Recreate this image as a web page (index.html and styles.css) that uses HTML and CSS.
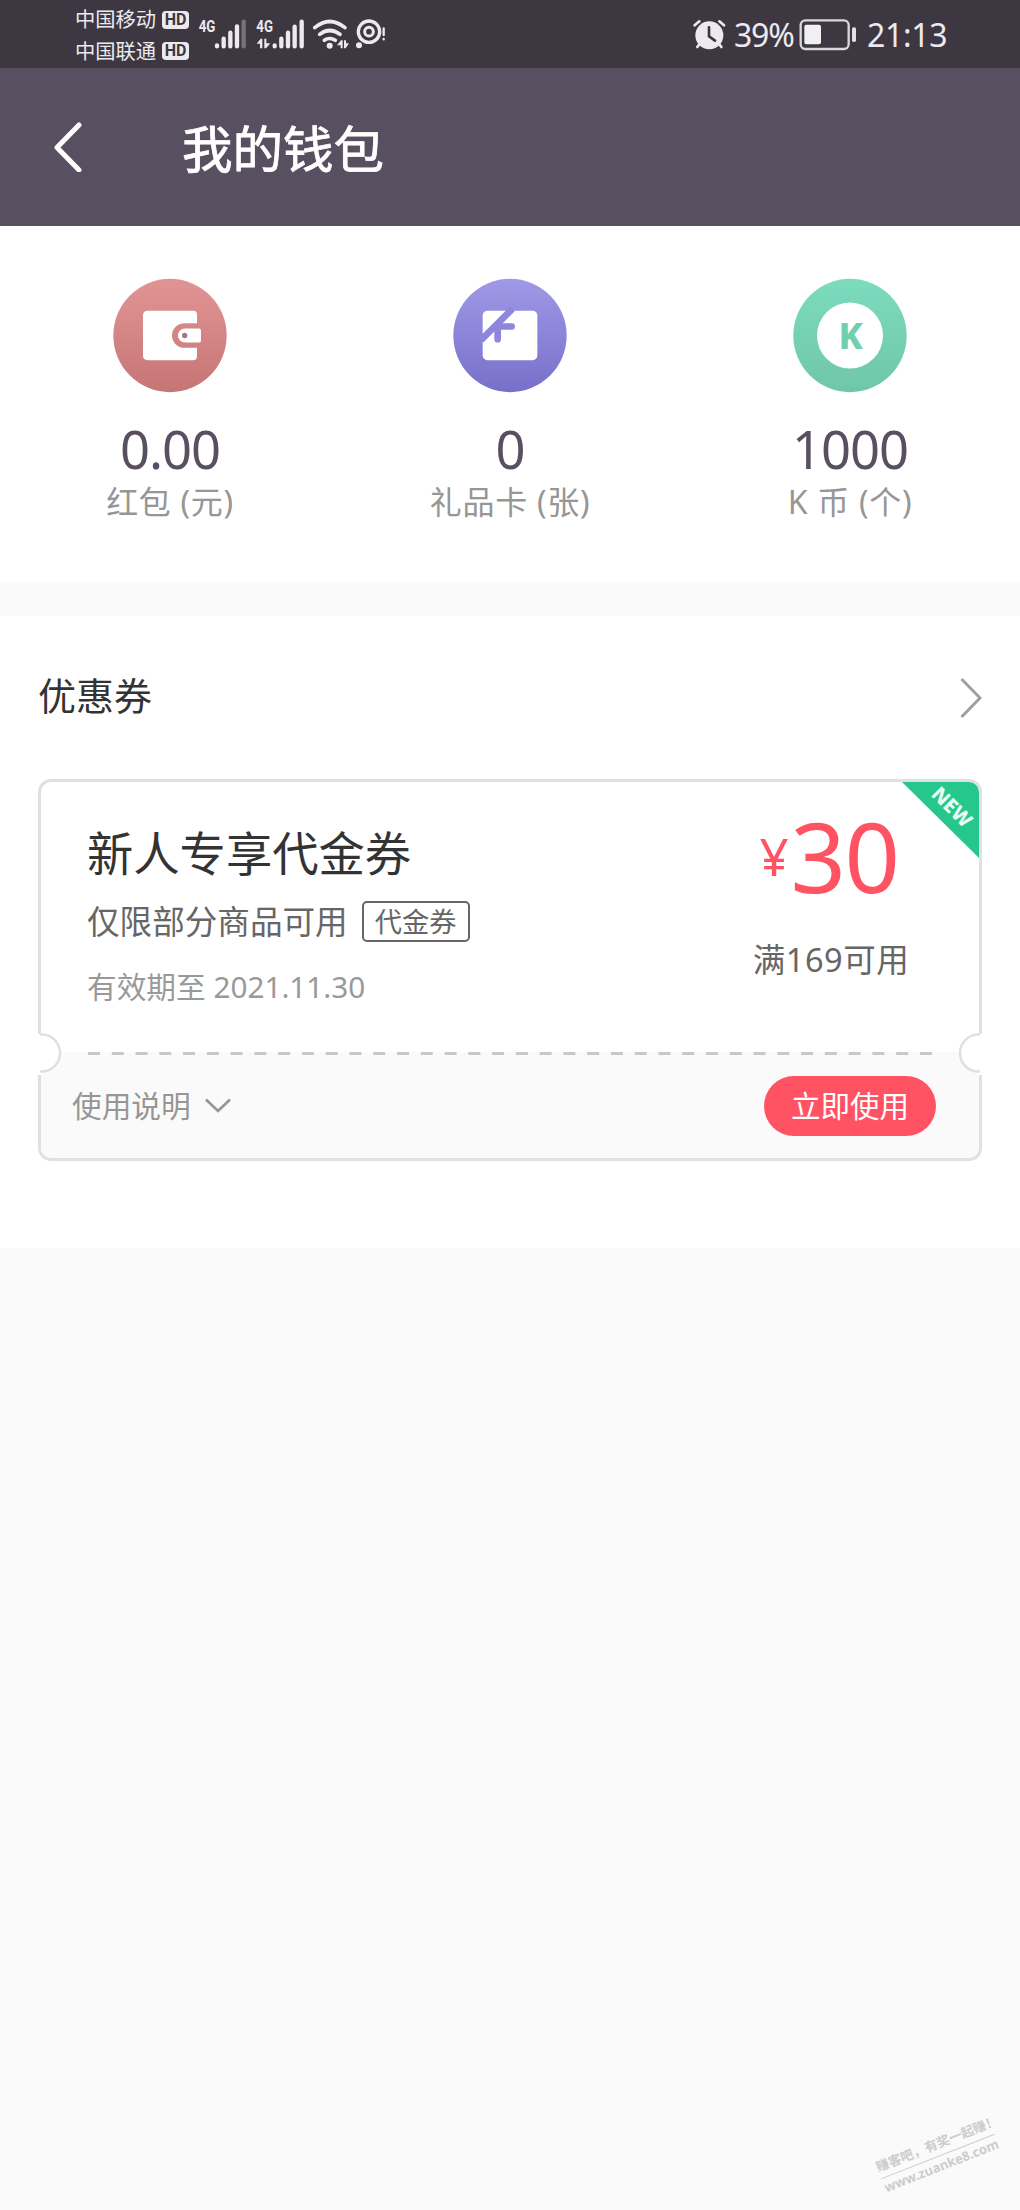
FILE: index.html
```html
<!DOCTYPE html>
<html lang="zh-CN">
<head>
<meta charset="utf-8">
<title>我的钱包</title>
<link rel="stylesheet" href="styles.css">
</head>
<body>
<div class="status">
  <div class="carriers">
    <div class="carrier"><span>中国移动</span><b class="hd">HD</b></div>
    <div class="carrier"><span>中国联通</span><b class="hd">HD</b></div>
  </div>
  <svg class="signals" viewBox="405 0 585 204" fill="#eceaee" stroke-linecap="round">
    <g font-family="Roboto, sans-serif" font-weight="700" font-size="50">
      <text x="416" y="97" textLength="50" lengthAdjust="spacingAndGlyphs">4G</text>
      <text x="589" y="97" textLength="50" lengthAdjust="spacingAndGlyphs">4G</text>
    </g>
    <g fill="none" stroke="#eceaee" stroke-width="13">
      <path d="M471 136v3M491 116v23M511 98v41M531 79v60"/>
      <path d="M551 65v74" stroke="#77717c"/>
      <path d="M644 136v3M664 116v23M684 98v41M704 80v59M725 65v74"/>
      <path d="M764 83Q809 46 855 83M779 103Q809 80 840 103" stroke-width="11"/>
      <path d="M793 121Q809 110 826 121" stroke-width="11"/>
      <circle cx="927" cy="95" r="32" stroke-width="10"/>
      <circle cx="927" cy="95" r="13" stroke-width="9"/>
      <path d="M971 85v20M971 117v1" stroke-width="7"/>
    </g>
    <path d="M590 131l12-15h5v29h-7v-14zM613 116h6v14h12l-13 15h-5zM831 136l12-15h5v24h-6v-9zM852 121h6v9h9l-10 15h-5z"/>
    <circle cx="809" cy="137" r="9"/><circle cx="897" cy="136" r="9"/>
  </svg>
  <svg class="alarm" viewBox="39 0 99 204" fill="none" stroke="#eceaee" stroke-linecap="round">
    <circle cx="88" cy="106" r="42" fill="#eceaee" stroke="none"/>
    <path d="M44 76l14-12M132 76l-14-12M60 130l-8 11M116 130l8 11" stroke-width="8"/>
    <path d="M87 82v27l18 13" stroke="#3d3742" stroke-width="8"/>
  </svg>
  <span class="percent">39%</span>
  <svg class="battery" viewBox="357 0 174 204">
    <rect x="362" y="61" width="144" height="86" rx="14" fill="none" stroke="#d9d6dc" stroke-width="7"/>
    <rect x="373" y="74" width="50" height="59" rx="6" fill="#f0eff1"/>
    <rect x="516" y="82" width="12" height="44" rx="5" fill="#e2e0e4"/>
  </svg>
  <span class="clock">21:13</span>
</div>
<header class="header">
  <svg class="back" viewBox="0 0 28 50"><path d="M25 3L3 25.500L25 48" fill="none" stroke="#fff" stroke-width="5" stroke-linecap="round" stroke-linejoin="round"/></svg>
  <h1>我的钱包</h1>
</header>
<section class="assets">
  <div class="asset">
    <svg class="disc" viewBox="0 0 342 342">
      <defs><linearGradient id="red" x2="0" y2="1"><stop stop-color="#e29494"/><stop offset="1" stop-color="#c67575"/></linearGradient></defs>
      <circle cx="171" cy="171" r="170" fill="url(#red)"/>
      <path d="M104 97H240Q252 97 252 109V134H214A36 36 0 0 0 214 208H252V233Q252 245 240 245H104Q90 245 90 231V111Q90 97 104 97Z" fill="#fff"/>
      <path d="M216 150H258Q264 150 264 156V186Q264 192 258 192H216A21 21 0 0 1 216 150Z" fill="#fff"/>
      <circle cx="215" cy="171" r="8" fill="#a97777"/>
    </svg>
    <strong>0.00</strong><span>红包 (元)</span>
  </div>
  <div class="asset">
    <svg class="disc" viewBox="0 0 342 342">
      <defs><linearGradient id="violet" x2="0" y2="1"><stop stop-color="#a099e6"/><stop offset="1" stop-color="#7770ca"/></linearGradient></defs>
      <circle cx="171" cy="171" r="170" fill="url(#violet)"/>
      <rect x="89" y="97" width="164" height="148" rx="14" fill="#fff"/>
      <path d="M178 91L84 185" fill="none" stroke="#8d86da" stroke-width="20"/>
      <path d="M134 182V144H176" fill="none" stroke="#8d86da" stroke-width="20" stroke-linecap="round"/>
    </svg>
    <strong>0</strong><span>礼品卡 (张)</span>
  </div>
  <div class="asset">
    <svg class="disc" viewBox="0 0 342 342">
      <defs><linearGradient id="green" x2="0" y2="1"><stop stop-color="#7cdcbd"/><stop offset="1" stop-color="#70c6a9"/></linearGradient></defs>
      <circle cx="171" cy="171" r="170" fill="url(#green)"/>
      <circle cx="171" cy="171" r="99" fill="#fff"/>
      <text x="173" y="211" text-anchor="middle" font-family="Noto Sans, sans-serif" font-weight="800" font-size="108" fill="#70cfae">K</text>
    </svg>
    <strong>1000</strong><span>K 币 (个)</span>
  </div>
</section>
<main class="coupons">
  <div class="section-head">
    <h2>优惠券</h2>
    <svg class="more" viewBox="0 0 22 42"><path d="M1.500 2L20 21L1.500 40" fill="none" stroke="#a0a0a2" stroke-width="3"/></svg>
  </div>
  <article class="coupon">
    <div class="offer">
      <div class="details">
        <h3>新人专享代金券</h3>
        <div class="scope"><span>仅限部分商品可用</span><em class="tag">代金券</em></div>
        <p class="expiry">有效期至 2021.11.30</p>
      </div>
      <div class="value">
        <div class="price"><span class="yen">¥</span><span class="amount">30</span></div>
        <p class="minimum">满169可用</p>
      </div>
    </div>
    <div class="actions">
      <div class="usage"><span>使用说明</span><svg viewBox="0 0 26 16"><path d="M1 1.500L13 13L25 1.500" fill="none" stroke="#969696" stroke-width="2.700"/></svg></div>
      <button class="use">立即使用</button>
    </div>
    <svg class="perforation" viewBox="0 0 844 3"><path d="M0 1.500H844" stroke="#c8c8c8" stroke-width="3" stroke-dasharray="12 11.770"/></svg>
    <svg class="notch left" viewBox="0 0 24 43"><path d="M0 2H4V43H0Z" fill="#fff"/><path d="M2 2.500H3.500A18.500 18.500 0 0 1 3.500 39.500H2" fill="#fff" stroke="#e0e0e0" stroke-width="2.500"/></svg>
    <svg class="notch right" viewBox="0 0 24 43"><path d="M0 2H4V43H0Z" fill="#fff"/><path d="M2 2.500H3.500A18.500 18.500 0 0 1 3.500 39.500H2" fill="#fff" stroke="#e0e0e0" stroke-width="2.500"/></svg>
    <div class="ribbon"><span>NEW</span></div>
  </article>
</main>
<div class="watermark"><span class="slogan">赚客吧，有奖一起赚！</span><span class="site">www.zuanke8.com</span></div>
</body>
</html>
```
FILE: styles.css
```css
* { box-sizing: border-box; margin: 0; padding: 0; }
body {
  position: relative;
  width: 1020px;
  height: 2210px;
  overflow: hidden;
  background: #fafafa;
  font-family: "Noto Sans", "Noto Sans CJK SC", sans-serif;
}
svg { display: block; flex: none; }
h1, h2, h3 { font-weight: 400; }
span, strong, em, h1, h2, h3, p { white-space: nowrap; }

.status { display: flex; height: 68px; padding-left: 75px; background: #3d3742; color: #eceaee; }
.carriers { display: flex; flex-direction: column; width: 120px; padding-top: 4px; }
.carrier { display: flex; align-items: center; gap: 6px; height: 31.500px; font-size: 20.300px; line-height: 31px; }
.hd { width: 27px; height: 18px; border-radius: 4px; background: #eceaee; color: #3d3742; font: 700 16px/18px Roboto, sans-serif; text-align: center; }
.signals { width: 195px; height: 68px; }
.alarm { width: 33px; height: 68px; margin-left: 303px; }
.percent { width: 65px; margin-left: 8px; font-size: 32px; line-height: 70px; letter-spacing: -1.200px; }
.battery { width: 58px; height: 68px; }
.clock { margin-left: 10px; font-size: 32px; line-height: 70px; letter-spacing: -0.300px; }

.header { display: flex; align-items: center; height: 158px; padding-left: 54px; background: #585060; color: #fff; }
.back { width: 28px; height: 50px; }
.header h1 { margin: 3px 0 0 100px; font-size: 50.500px; line-height: 70px; -webkit-text-stroke: 0.800px #fff; }

.assets { display: grid; grid-template-columns: repeat(3, 340px); height: 356px; padding-top: 52px; background: #fff; }
.asset { display: flex; flex-direction: column; align-items: center; }
.disc { width: 114px; height: 115px; }
.asset strong { margin-top: 27px; font-size: 52.500px; font-weight: 400; line-height: 58px; letter-spacing: -1px; color: #585060; }
.asset span { margin-top: 3px; font-size: 32px; line-height: 42px; letter-spacing: 0.700px; color: #969696; }

.coupons { height: 632px; margin-top: 34px; padding: 0 38px; background: #fff; }
.section-head { display: flex; align-items: center; justify-content: space-between; height: 163px; color: #333; }
.section-head h2 { margin-bottom: 5px; font-size: 38px; line-height: 54px; }
.more { width: 22px; height: 42px; }

.coupon { position: relative; width: 944px; height: 382px; border: 3px solid #e0e0e0; border-radius: 13px; }
.offer { display: flex; justify-content: space-between; height: 270px; padding-left: 46px; }
.details { display: flex; flex-direction: column; padding-top: 41px; }
.details h3 { font-size: 46.300px; line-height: 62px; color: #333; }
.scope { display: flex; align-items: center; gap: 14px; height: 73px; color: #666; font-size: 32.600px; line-height: 42px; }
.tag { width: 108px; height: 41px; border: 2.500px solid #666; border-radius: 5px; font-size: 27.200px; font-style: normal; line-height: 38px; text-align: center; }
.expiry { margin-top: 7px; color: #999; font-size: 29.700px; line-height: 44px; }
.value { display: flex; flex-direction: column; width: 300px; align-items: center; }
.price { display: flex; height: 150px; color: #ff5263; }
.yen { padding-right: 2px; font-size: 51px; line-height: 148px; }
.amount { font-size: 97px; line-height: 146px; letter-spacing: -1.500px; }
.minimum { padding-left: 4px; font-size: 32.500px; line-height: 56px; letter-spacing: 0.500px; color: #666; }
.actions { display: flex; align-items: center; justify-content: space-between; height: 106px; padding: 1px 43px 0 31px; border-radius: 0 0 10px 10px; background: #fafafa; }
.usage { display: flex; align-items: center; gap: 14px; color: #969696; font-size: 29.700px; line-height: 42px; }
.usage svg { width: 26px; height: 16px; }
.use { width: 172px; height: 60px; border: 0; border-radius: 30px; background: #ff5263; color: #fff; font: 400 29.500px/56px "Noto Sans", "Noto Sans CJK SC", sans-serif; }
.perforation { position: absolute; left: 47px; top: 270px; width: 844px; height: 3px; }
.notch { position: absolute; top: 250px; width: 24px; height: 43px; }
.notch.left { left: -3px; }
.notch.right { right: -3px; transform: scaleX(-1); }
.ribbon { position: absolute; top: 0; right: 0; width: 77px; height: 76px; border-top-right-radius: 10px; background: #26c78c; clip-path: polygon(0 0, 100% 0, 100% 100%); }
.ribbon span { position: absolute; left: 20px; top: 13px; width: 60px; color: #e9fff6; font-size: 20px; font-weight: 800; line-height: 24px; text-align: center; transform: rotate(45deg); }

.watermark { position: absolute; left: 877px; top: 2134px; width: 122px; height: 46px; color: #ccc; transform: rotate(-21.500deg); }
.slogan { display: block; width: 122px; height: 23px; border-bottom: 1px solid #ccc; font-size: 13px; font-weight: 700; line-height: 20px; }
.site { display: block; font-size: 13px; font-weight: 700; line-height: 18px; }
```
